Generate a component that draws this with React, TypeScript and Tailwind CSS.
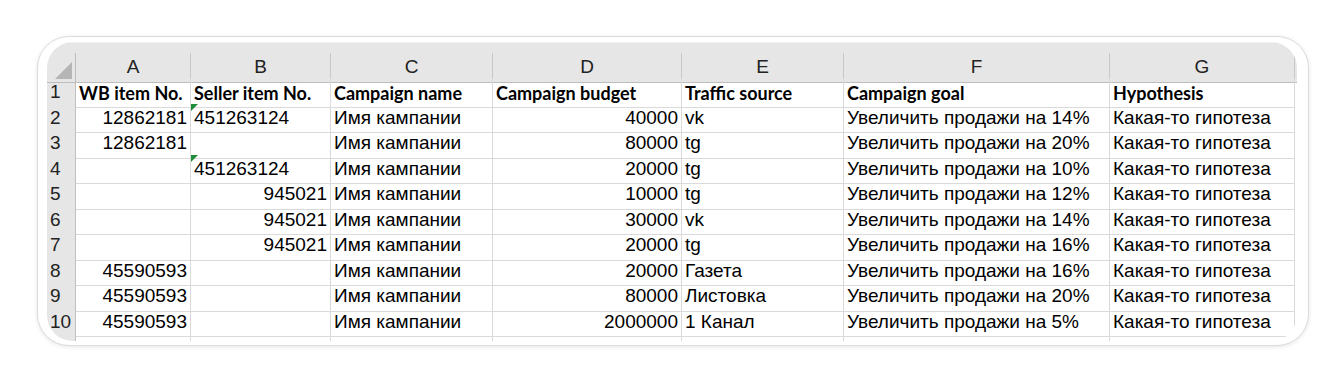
import React from "react";

type Cell = { v: string; right?: boolean; flag?: boolean };

const cols = ["A", "B", "C", "D", "E", "F", "G"];

const heads = [
  "WB item No.",
  "Seller item No.",
  "Campaign name",
  "Campaign budget",
  "Traffic source",
  "Campaign goal",
  "Hypothesis",
];

const rows: Cell[][] = [
  [{ v: "12862181", right: true }, { v: "451263124", flag: true }, { v: "Имя кампании" }, { v: "40000", right: true }, { v: "vk" }, { v: "Увеличить продажи на 14%" }, { v: "Какая-то гипотеза" }],
  [{ v: "12862181", right: true }, { v: "" }, { v: "Имя кампании" }, { v: "80000", right: true }, { v: "tg" }, { v: "Увеличить продажи на 20%" }, { v: "Какая-то гипотеза" }],
  [{ v: "" }, { v: "451263124", flag: true }, { v: "Имя кампании" }, { v: "20000", right: true }, { v: "tg" }, { v: "Увеличить продажи на 10%" }, { v: "Какая-то гипотеза" }],
  [{ v: "" }, { v: "945021", right: true }, { v: "Имя кампании" }, { v: "10000", right: true }, { v: "tg" }, { v: "Увеличить продажи на 12%" }, { v: "Какая-то гипотеза" }],
  [{ v: "" }, { v: "945021", right: true }, { v: "Имя кампании" }, { v: "30000", right: true }, { v: "vk" }, { v: "Увеличить продажи на 14%" }, { v: "Какая-то гипотеза" }],
  [{ v: "" }, { v: "945021", right: true }, { v: "Имя кампании" }, { v: "20000", right: true }, { v: "tg" }, { v: "Увеличить продажи на 16%" }, { v: "Какая-то гипотеза" }],
  [{ v: "45590593", right: true }, { v: "" }, { v: "Имя кампании" }, { v: "20000", right: true }, { v: "Газета" }, { v: "Увеличить продажи на 16%" }, { v: "Какая-то гипотеза" }],
  [{ v: "45590593", right: true }, { v: "" }, { v: "Имя кампании" }, { v: "80000", right: true }, { v: "Листовка" }, { v: "Увеличить продажи на 20%" }, { v: "Какая-то гипотеза" }],
  [{ v: "45590593", right: true }, { v: "" }, { v: "Имя кампании" }, { v: "2000000", right: true }, { v: "1 Канал" }, { v: "Увеличить продажи на 5%" }, { v: "Какая-то гипотеза" }],
];

const grid =
  "grid grid-cols-[29px_115px_140px_162px_189px_162px_266px_185px_1fr]";

function RowNum({ n }: { n: string }) {
  return (
    <div className="flex h-full items-center border-r border-b border-[#bfbfbf] border-b-[#cfcfcf] bg-[#e6e6e6] pl-[3px] text-[19px] text-[#222]">
      {n}
    </div>
  );
}

function DataCell({ c }: { c: Cell }) {
  return (
    <div
      className={
        "relative flex h-full items-center overflow-hidden whitespace-nowrap border-r border-b border-[#dadada] px-[3px] text-[19px] text-black " +
        (c.right ? "justify-end" : "justify-start")
      }
    >
      {c.flag && (
        <span className="absolute left-0 top-0 h-0 w-0 border-t-[7px] border-r-[7px] border-t-[#1e8c3a] border-r-transparent" />
      )}
      {c.v}
    </div>
  );
}

export default function App() {
  return (
    <div
      className="h-[382px] w-[1344px] bg-white pt-[36px] pl-[37px]"
      style={{ fontFamily: '"Liberation Sans", Arial, sans-serif' }}
    >
      <div className="h-[310px] w-[1272px] rounded-[32px] border border-[#dcdcdc] bg-white pt-[5px] pr-[11px] pb-[4px] pl-[9px] shadow-[0_1px_4px_rgba(0,0,0,0.10)]">
        <div className="h-full overflow-hidden rounded-[26px] bg-white">
          <div className="h-[11px] border-t border-[#f2f2f2] bg-[#e6e6e6]" />
          {/* column letters */}
          <div className={grid + " h-[25px]"}>
            <div className="relative border-r border-b border-[#bdbdbd] bg-[#e6e6e6]">
              <span className="absolute right-[3px] bottom-[3px] h-0 w-0 border-b-[17px] border-l-[17px] border-b-[#b5b5b5] border-l-transparent" />
            </div>
            {cols.map((c) => (
              <div
                key={c}
                className="flex items-center justify-center border-r border-b border-r-[#c8c8c8] border-b-[#bdbdbd] bg-[#e6e6e6] text-[19px] text-[#222]"
              >
                {c}
              </div>
            ))}
            <div className="border-b border-[#bdbdbd] bg-[#e6e6e6]" />
          </div>
          {/* header row */}
          <div className={grid + " h-[25.5px]"}>
            <RowNum n="1" />
            {heads.map((h) => (
              <div
                key={h}
                className="flex items-center whitespace-nowrap border-r border-b border-[#dadada] px-[3px] pt-[1px] text-[18px] font-bold leading-none text-black"
                style={{ fontFamily: 'Lato, "Open Sans", sans-serif' }}
              >
                {h}
              </div>
            ))}
            <div />
          </div>
          {rows.map((r, i) => (
            <div key={i} className={grid + " h-[25.5px]"}>
              <RowNum n={String(i + 2)} />
              {r.map((c, j) => (
                <DataCell key={j} c={c} />
              ))}
              <div />
            </div>
          ))}
          {/* partial row 11, clipped by the frame */}
          <div className={grid + " h-[25.5px]"}>
            <RowNum n="" />
            {cols.map((c) => (
              <DataCell key={c} c={{ v: "" }} />
            ))}
            <div />
          </div>
        </div>
      </div>
    </div>
  );
}
